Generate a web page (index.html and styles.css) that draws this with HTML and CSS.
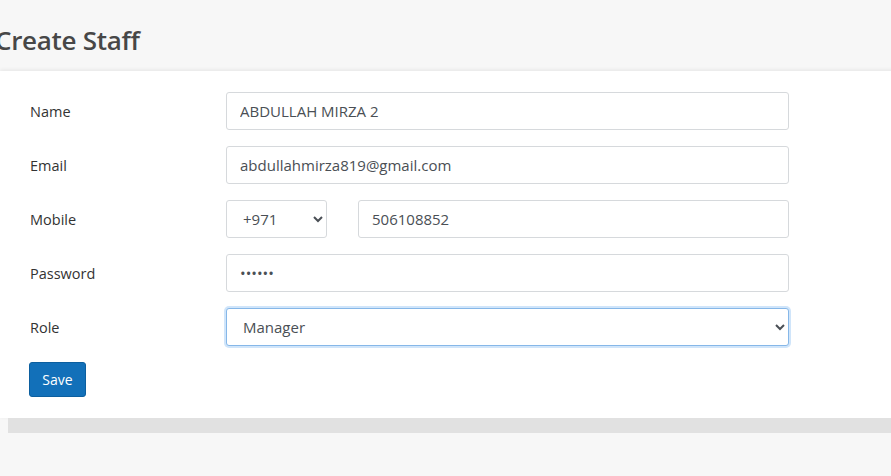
FILE: index.html
```html
<!DOCTYPE html>
<html>
<head>
<meta charset="utf-8">
<link rel="stylesheet" href="styles.css">
</head>
<body>
<header class="page-head">
  <h1 class="title">Create Staff</h1>
</header>
<main class="card">
  <form class="form">
    <label class="label">Name</label>
    <div class="field"><input class="control" type="text" value="ABDULLAH MIRZA 2"></div>
    <label class="label">Email</label>
    <div class="field"><input class="control" type="text" value="abdullahmirza819@gmail.com"></div>
    <label class="label">Mobile</label>
    <div class="field mobile">
      <select class="control code"><option>+971</option></select>
      <input class="control" type="text" value="506108852">
    </div>
    <label class="label">Password</label>
    <div class="field"><input class="control" type="password" value="123456"></div>
    <label class="label">Role</label>
    <div class="field"><select class="control role"><option>Manager</option></select></div>
    <div class="actions"><button type="button" class="btn">Save</button></div>
  </form>
</main>
</body>
</html>
```
FILE: styles.css
```css
html, body {
  margin: 0;
  padding: 0;
}
body {
  background: #f7f7f7;
  font-family: "Open Sans", "Noto Sans", sans-serif;
  color: #333;
  width: 891px;
  height: 476px;
  overflow: hidden;
}
.page-head {
  height: 71px;
  display: flex;
  align-items: center;
  padding-left: 0;
}
.title {
  margin: 0 0 0 -5px;
  font-size: 26px;
  font-weight: 600;
  color: #474747;
  letter-spacing: -0.3px;
  padding-top: 8px;
}
.card {
  background: #fff;
  margin-right: -20px;
  padding: 21px 0 21px 29px;
  box-shadow: 8px 15px 0 #e1e1e1, 0 -1px 4px rgba(0,0,0,0.08);
}
.form {
  display: grid;
  grid-template-columns: 197px 563px;
  row-gap: 16px;
  align-items: center;
}
.label {
  font-size: 14.5px;
  color: #333;
  padding-left: 1px;
}
.field {
  display: flex;
}
.mobile {
  gap: 31px;
}
.control {
  box-sizing: border-box;
  height: 38px;
  width: 100%;
  border: 1px solid #d6d9dc;
  border-radius: 3px;
  background: #fff;
  font-family: "Open Sans", "Noto Sans", sans-serif;
  font-size: 15px;
  color: #4a4f55;
  padding: 0 13px;
  outline: none;
}
select.control {
  appearance: auto;
  padding: 0 8px 0 12px;
}
.code {
  flex: 0 0 101px;
  width: 101px;
}
.role {
  border-color: #86b7e8;
  box-shadow: 0 0 0 2px rgba(120,180,240,0.35);
}
.actions {
  grid-column: 1 / 3;
}
.btn {
  height: 35px;
  width: 57px;
  background: #1270b9;
  border: 1px solid #0c5f9f;
  border-radius: 3px;
  color: #fff;
  font-family: "Open Sans", "Noto Sans", sans-serif;
  font-size: 14px;
  padding: 0;
}
```
